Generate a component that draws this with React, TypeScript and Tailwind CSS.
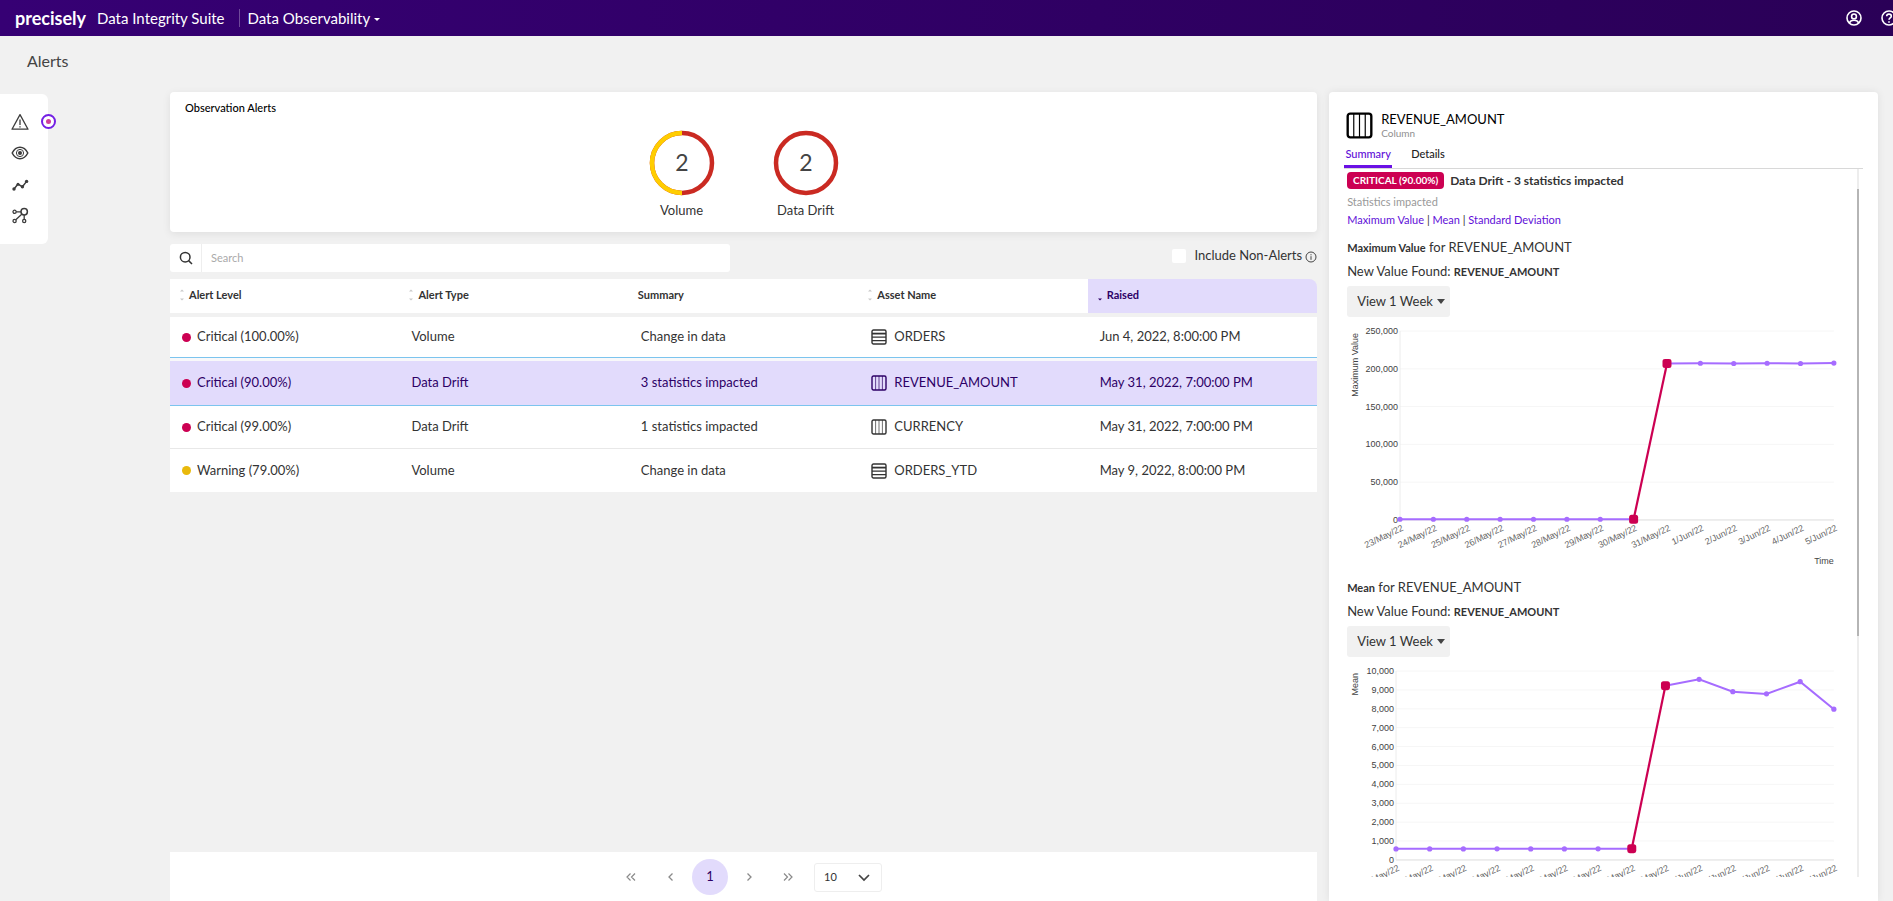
import type { ReactNode } from "react";
import clsx from "clsx";

type AssetKind = "table" | "column";

const alerts: {
  level: string;
  color: string;
  type: string;
  summary: string;
  kind: AssetKind;
  asset: string;
  raised: string;
  selected?: boolean;
}[] = [
  { level: "Critical (100.00%)", color: "bg-[#cc0052]", type: "Volume", summary: "Change in data", kind: "table", asset: "ORDERS", raised: "Jun 4, 2022, 8:00:00 PM" },
  { level: "Critical (90.00%)", color: "bg-[#cc0052]", type: "Data Drift", summary: "3 statistics impacted", kind: "column", asset: "REVENUE_AMOUNT", raised: "May 31, 2022, 7:00:00 PM", selected: true },
  { level: "Critical (99.00%)", color: "bg-[#cc0052]", type: "Data Drift", summary: "1 statistics impacted", kind: "column", asset: "CURRENCY", raised: "May 31, 2022, 7:00:00 PM" },
  { level: "Warning (79.00%)", color: "bg-[#e9b90c]", type: "Volume", summary: "Change in data", kind: "table", asset: "ORDERS_YTD", raised: "May 9, 2022, 8:00:00 PM" }
];

const columns = [
  { name: "Alert Level", sort: "both" },
  { name: "Alert Type", sort: "both" },
  { name: "Summary", sort: "none" },
  { name: "Asset Name", sort: "both" },
  { name: "Raised", sort: "desc" }
];

const days = [
  "23/May/22", "24/May/22", "25/May/22", "26/May/22", "27/May/22",
  "28/May/22", "29/May/22", "30/May/22", "31/May/22", "1/Jun/22",
  "2/Jun/22", "3/Jun/22", "4/Jun/22", "5/Jun/22"
];

const maxValues = [900, 900, 900, 900, 900, 900, 900, 900, 207000, 207300, 207000, 207300, 207000, 207500];
const meanValues = [585, 585, 585, 590, 585, 585, 590, 590, 9222, 9560, 8905, 8790, 9435, 7980];

// index of the first of the two points joined by the anomaly line
const ANOMALY = 7;

function AssetIcon({ kind, className }: { kind: AssetKind; className?: string }) {
  return (
    <svg viewBox="0 0 16 16" fill="none" stroke="currentColor" className={className} aria-hidden="true">
      <rect x="1" y="1" width="14" height="14" rx="1.5" strokeWidth="1.4" />
      {kind === "table" ? (
        <>
          <path d="M1 4.6H15" strokeWidth="1.8" />
          <path d="M1 8.2H15M1 11.6H15" strokeWidth="1.2" />
        </>
      ) : (
        <path d="M4.6 1V15M8 1V15M11.4 1V15" strokeWidth="0.7" />
      )}
    </svg>
  );
}

function SortIcon({ sort }: { sort: string }) {
  if (sort === "none") return null;
  return (
    <svg viewBox="0 0 6 12" className="h-3 w-[6px] shrink-0" aria-hidden="true">
      {sort === "both" && <path d="M1 2.6L3 0.6L5 2.6Z" fill="#c9c9c9" />}
      <path d="M1 9.4L3 11.4L5 9.4Z" fill={sort === "desc" ? "#2d0066" : "#c9c9c9"} />
    </svg>
  );
}

function Donut({ label, value, split }: { label: string; value: number; split?: boolean }) {
  return (
    <div className="flex w-[124px] flex-col items-center">
      <svg viewBox="0 0 66 66" className="size-[66px]" role="img" aria-label={`${label}: ${value}`}>
        <circle cx="33" cy="33" r="30" fill="none" stroke="#ca2a22" strokeWidth="4.5" />
        {split && <path d="M33 3A30 30 0 0 0 33 63" fill="none" stroke="#ffcd00" strokeWidth="4.5" />}
        <text x="33" y="41" textAnchor="middle" fontSize="23" fill="#444">
          {value}
        </text>
      </svg>
      <span className="mt-1 text-[13px] leading-5 text-[#333]">{label}</span>
    </div>
  );
}

function NavLink({ label, children }: { label: string; children: ReactNode }) {
  return (
    <a href="#" aria-label={label} className="block text-[#3c3c3c]">
      <svg viewBox="0 0 18 18" className="size-[18px]" fill="none" stroke="currentColor" strokeWidth="1.3">
        {children}
      </svg>
    </a>
  );
}

function LineChart({ title, values, max, step, left, time }: {
  title: string;
  values: number[];
  max: number;
  step: number;
  left: number;
  time?: boolean;
}) {
  const top = 10;
  const bottom = 199;
  const right = 487;
  const points = values.map((v, i) => ({
    x: left + ((right - left) * i) / (values.length - 1),
    y: bottom - (v / max) * (bottom - top)
  }));
  const path = (list: { x: number; y: number }[]) =>
    list.map((p, i) => `${i ? "L" : "M"}${p.x.toFixed(1)} ${p.y.toFixed(1)}`).join(" ");
  const ticks = Array.from({ length: max / step + 1 }, (_, i) => i * step);

  return (
    <svg viewBox="0 0 490 250" className="mt-1 block w-full shrink-0 overflow-visible font-['Liberation_Sans',sans-serif]" role="img" aria-label={`${title} over time`}>
      {ticks.map((tick) => {
        const y = bottom - (tick / max) * (bottom - top);
        return (
          <g key={tick}>
            <line x1={left} x2={right} y1={y} y2={y} stroke={tick ? "#f6f6f6" : "#dcdcdc"} />
            <text x={left - 2} y={y + 3} textAnchor="end" fontSize="9" fill="#3f3f3f">
              {tick.toLocaleString("en-US")}
            </text>
          </g>
        );
      })}
      <line x1={left} x2={left} y1={top} y2={bottom} stroke="#ececec" />
      <text transform="translate(11 12) rotate(-90)" textAnchor="end" fontSize="9" fill="#444">
        {title}
      </text>
      {days.map((day, i) => (
        <text key={day} transform={`translate(${points[i].x + 4} 209) rotate(-26)`} textAnchor="end" fontSize="9" fill="#666">
          {day}
        </text>
      ))}
      {time && (
        <text x={right} y="243" textAnchor="end" fontSize="9" fill="#444">
          Time
        </text>
      )}
      <path d={path(points.slice(0, ANOMALY + 1))} fill="none" stroke="#a66cff" strokeWidth="2" />
      <path d={path(points.slice(ANOMALY + 1))} fill="none" stroke="#a66cff" strokeWidth="2" />
      <path d={path(points.slice(ANOMALY, ANOMALY + 2))} fill="none" stroke="#cc0052" strokeWidth="2.2" />
      {points.map((p, i) =>
        i === ANOMALY || i === ANOMALY + 1 ? (
          <rect key={i} x={p.x - 4.5} y={p.y - 4.5} width="9" height="9" rx="2.5" fill="#cc0052" />
        ) : (
          <circle key={i} cx={p.x} cy={p.y} r="2.6" fill="#a66cff" />
        )
      )}
    </svg>
  );
}

function StatSection({ stat, children }: { stat: string; children: ReactNode }) {
  return (
    <section>
      <h3 className="text-[13px] leading-5 font-normal">
        <b className="text-[11px] leading-none">{stat}</b> for REVENUE_AMOUNT
      </h3>
      <p className="mt-1 text-[13px] leading-5">
        New Value Found: <b className="text-[11px] leading-none">REVENUE_AMOUNT</b>
      </p>
      <div className="relative mt-[5px] h-[31px] w-[103px]">
        <select
          aria-label={`${stat} range`}
          className="size-full appearance-none rounded-[3px] bg-[#f1f1f1] pl-[10px] text-[13px]"
        >
          <option>View 1 Week</option>
        </select>
        <svg viewBox="0 0 8 5" className="pointer-events-none absolute top-[13px] right-[5px] h-[5px] w-2" aria-hidden="true">
          <path d="M0 0H8L4 5Z" fill="#444" />
        </svg>
      </div>
      {children}
    </section>
  );
}

function Header() {
  return (
    <header className="flex h-9 shrink-0 items-center overflow-hidden bg-gradient-to-r from-[#360074] to-[#2a0057] pl-[15px] text-[15px] text-white">
      <span className="text-[18px] leading-9 font-bold">precisely</span>
      <span className="ml-[11px] leading-9">Data Integrity Suite</span>
      <span className="mr-2 ml-[14px] h-[18px] w-px bg-[#6f4a9a]" />
      <button type="button" className="flex items-center gap-1 leading-9">
        Data Observability
        <svg viewBox="0 0 6 4" className="mt-1 h-1 w-[6px]" aria-hidden="true">
          <path d="M0 0H6L3 3Z" fill="white" />
        </svg>
      </button>
      <div className="-mr-1 ml-auto flex gap-[19px]">
        <button type="button" aria-label="Account">
          <svg viewBox="0 0 16 16" className="size-4" fill="none" stroke="white" strokeWidth="1.6">
            <circle cx="8" cy="8" r="7" />
            <circle cx="8" cy="6.4" r="2.4" />
            <path d="M3.4 13C4.2 10.9 6 10.2 8 10.2S11.8 10.9 12.6 13" />
          </svg>
        </button>
        <button type="button" aria-label="Help">
          <svg viewBox="0 0 16 16" className="size-4" fill="none" stroke="white" strokeWidth="1.6">
            <circle cx="8" cy="8" r="7" />
            <path d="M5.7 6.3C5.7 3.4 10.3 3.5 10.3 6.2C10.3 7.9 8 8 8 9.8M8 11.2V12.8" />
          </svg>
        </button>
      </div>
    </header>
  );
}

function SideNav() {
  return (
    <nav className="relative mt-[2px] flex h-[150px] w-12 shrink-0 flex-col gap-[13px] rounded-r-md bg-white pt-[19px] pl-[11px]">
      <NavLink label="Alerts">
        <path d="M9 1.6L17 16.2H1Z" strokeLinejoin="round" />
        <path d="M9 6.6V12M9 13.2V14.6" />
      </NavLink>
      <NavLink label="Observers">
        <path d="M1.2 9C5 1.4 13 1.4 16.8 9C13 16.6 5 16.6 1.2 9Z" strokeWidth="1.5" />
        <circle cx="9" cy="9" r="3.6" strokeWidth="1" />
        <circle cx="9" cy="9" r="2" fill="currentColor" stroke="none" />
      </NavLink>
      <NavLink label="Trends">
        <path d="M3 14L7 9L11.4 11.8L15.6 6.4" strokeWidth="1.5" />
        <g fill="currentColor" stroke="none">
          <circle cx="3" cy="14" r="1.7" />
          <circle cx="7" cy="9.2" r="1.5" />
          <circle cx="11.4" cy="11.8" r="1.7" />
          <circle cx="15.6" cy="6.4" r="1.7" />
        </g>
      </NavLink>
      <NavLink label="Lineage">
        <circle cx="13.2" cy="5.8" r="3.2" strokeWidth="1.5" />
        <circle cx="3.6" cy="5.8" r="1.6" />
        <circle cx="3.6" cy="15" r="1.6" />
        <circle cx="13.2" cy="15" r="1.6" />
        <path d="M5.2 5.8H10M4.8 13.8L11 8.1M13.2 9V13.4" />
      </NavLink>
      <span className="absolute top-5 -right-2 flex size-[15px] items-center justify-center rounded-full border-2 border-[#7420e4] bg-white">
        <span className="size-[5px] rounded-full bg-[#cf3f9a]" />
      </span>
    </nav>
  );
}

function Pagination() {
  return (
    <div className="mt-auto flex h-[49px] items-start justify-center bg-white pt-[7px]">
      <div className="ml-4 flex h-9 items-center text-[#8a8a8a]">
        <button type="button" aria-label="First page" className="w-10 pl-[5px]">
          <svg viewBox="0 0 10 8" className="h-2 w-[10px]" fill="none" stroke="currentColor" strokeWidth="1.2">
            <path d="M4.5 0.5L1 4L4.5 7.5M9 0.5L5.5 4L9 7.5" />
          </svg>
        </button>
        <button type="button" aria-label="Previous page" className="w-[31px] pl-[7px]">
          <svg viewBox="0 0 5 8" className="h-2 w-[5px]" fill="none" stroke="currentColor" strokeWidth="1.3">
            <path d="M4.5 0.5L1 4L4.5 7.5" />
          </svg>
        </button>
        <button type="button" className="size-9 rounded-full bg-[#e2dbfc] text-[13px] text-[#2d0066]">
          1
        </button>
        <button type="button" aria-label="Next page" className="w-[38px] pl-[19px]">
          <svg viewBox="0 0 5 8" className="h-2 w-[5px]" fill="none" stroke="currentColor" strokeWidth="1.3">
            <path d="M0.5 0.5L4 4L0.5 7.5" />
          </svg>
        </button>
        <button type="button" aria-label="Last page" className="w-12 pl-[17px]">
          <svg viewBox="0 0 10 8" className="h-2 w-[10px]" fill="none" stroke="currentColor" strokeWidth="1.2">
            <path d="M1 0.5L4.5 4L1 7.5M5.5 0.5L9 4L5.5 7.5" />
          </svg>
        </button>
        <div className="relative h-[29px] w-[68px]">
          <select
            aria-label="Rows per page"
            className="size-full appearance-none rounded-[3px] border border-[#eeeeee] bg-white pl-[9px] text-[11px] text-[#333]"
          >
            <option>10</option>
          </select>
          <svg viewBox="0 0 12 8" className="pointer-events-none absolute top-[11px] right-3 h-2 w-3" fill="none" stroke="#444" strokeWidth="1.7">
            <path d="M1 1L6 6L11 1" />
          </svg>
        </div>
      </div>
    </div>
  );
}

function AlertsTable() {
  return (
    <table className="mt-[7px] w-full table-fixed border-separate border-spacing-0 text-left text-[13px] text-[#333]">
      <thead>
        <tr>
          {columns.map((col) => (
            <th
              key={col.name}
              className={clsx(
                "h-[38px] border-b-4 border-[#f1f1f1] p-0 pb-[2px] pl-[9px] text-[11px] font-bold",
                col.sort === "desc" ? "rounded-tr-lg bg-[#e2dbfc] text-[#2d0066]" : "bg-white"
              )}
            >
              <span className="flex items-center gap-1">
                <SortIcon sort={col.sort} />
                {col.name}
              </span>
            </th>
          ))}
        </tr>
      </thead>
      <tbody>
        {alerts.map((row, i) => (
          <tr
            key={i}
            className={clsx(
              row.selected
                ? "text-[#2d0066] [&>td]:h-12 [&>td]:border-t-3 [&>td]:border-b [&>td]:border-t-[#f8f8fa] [&>td]:border-b-[#7cc4ee] [&>td]:bg-[#e2dbfc]"
                : "[&>td]:bg-white",
              i === 0 && "[&>td]:h-[41px] [&>td]:border-b [&>td]:border-[#7cc4ee]",
              i === 2 && "[&>td]:h-[43px] [&>td]:border-b [&>td]:border-[#e8e8e8]",
              i === 3 && "[&>td]:h-[43px]"
            )}
          >
            <td className="p-0 pl-3">
              <span className="flex items-center gap-[6px]">
                <span className={clsx("size-[9px] rounded-full", row.color)} />
                {row.level}
              </span>
            </td>
            <td className="p-0 pl-3">{row.type}</td>
            <td className="p-0 pl-3">{row.summary}</td>
            <td className="p-0 pl-[13px]">
              <span className="flex items-center gap-[7px]">
                <AssetIcon kind={row.kind} className="size-4" />
                {row.asset}
              </span>
            </td>
            <td className="p-0 pl-3">{row.raised}</td>
          </tr>
        ))}
      </tbody>
    </table>
  );
}

function DetailPanel() {
  return (
    <aside className="flex min-h-0 flex-col rounded-t-[4px] bg-white pt-[18px] pr-[15px] pb-6 pl-[15px] shadow-[0_0_8px_rgba(0,0,0,0.08)]">
      <div className="flex items-center gap-2 pl-[2px]">
        <AssetIcon kind="column" className="size-[27px] text-black" />
        <div className="py-px">
          <h2 className="text-[13px] leading-4 text-black">REVENUE_AMOUNT</h2>
          <p className="text-[10px] leading-3 text-[#8f8f8f]">Column</p>
        </div>
      </div>
      <div className="mt-1 flex gap-[19px] border-b border-[#d8d8d8] text-[11px] font-medium" role="tablist">
        <button type="button" role="tab" aria-selected="true" className="h-[24px] w-12 border-b-3 border-[#6a10e5] text-[#5f0fd8]">
          Summary
        </button>
        <button type="button" role="tab" aria-selected="false" className="h-[24px] border-b-3 border-transparent text-[#222]">
          Details
        </button>
      </div>
      <div className="flex min-h-0 flex-1 pr-1">
        <div className="min-w-0 flex-1 overflow-hidden pt-[3px] pr-5 pl-[3px] text-[#333]">
          <div className="flex items-center gap-[6px]">
            <span className="flex h-[17px] w-[97px] items-center justify-center rounded-[4px] bg-[#cc0052] text-[10px] font-bold text-white">
              CRITICAL (90.00%)
            </span>
            <span className="text-xs leading-[17px] font-bold">Data Drift - 3 statistics impacted</span>
          </div>
          <p className="mt-1 text-[11px] leading-[18px] text-[#999]">Statistics impacted</p>
          <p className="mb-2 text-[11px] leading-[18px]">
            <a href="#" className="text-[#5f0fd8]">Maximum Value</a> |{" "}
            <a href="#" className="text-[#5f0fd8]">Mean</a> |{" "}
            <a href="#" className="text-[#5f0fd8]">Standard Deviation</a>
          </p>
          <StatSection stat="Maximum Value">
            <LineChart title="Maximum Value" values={maxValues} max={250000} step={50000} left={53} time />
          </StatSection>
          <div className="h-[6px]" />
          <StatSection stat="Mean">
            <LineChart title="Mean" values={meanValues} max={10000} step={1000} left={49} />
          </StatSection>
        </div>
        <div className="w-[2px] bg-[#ededed] pt-5">
          <div className="h-[65%] bg-[#b5b5b5]" />
        </div>
      </div>
    </aside>
  );
}

export default function App() {
  return (
    <div className="flex h-screen flex-col overflow-hidden bg-[#f1f1f1] font-[Lato,sans-serif]">
      <Header />
      <h1 className="h-14 shrink-0 pt-[13px] pl-[27px] text-base leading-6 text-[#444]">Alerts</h1>
      <div className="flex min-h-0 flex-1 pr-[15px]">
        <SideNav />
        <div className="ml-[122px] grid min-w-0 flex-1 grid-cols-[209fr_100fr] grid-rows-[minmax(0,1fr)] gap-3">
          <main className="flex min-w-0 flex-col">
            <section className="h-[140px] shrink-0 rounded-[4px] bg-white px-[15px] pt-2 shadow-[0_2px_8px_rgba(0,0,0,0.08)]">
              <h2 className="text-[11px] leading-4 font-medium text-black">Observation Alerts</h2>
              <div className="mt-[14px] flex justify-center">
                <Donut label="Volume" value={2} split />
                <Donut label="Data Drift" value={2} />
              </div>
            </section>
            <div className="mt-3 flex h-7 items-center justify-between">
              <label className="flex h-7 w-[560px] items-center rounded-[3px] bg-white">
                <span className="flex h-7 w-8 items-center justify-center border-r border-[#eeeeee]">
                  <svg viewBox="0 0 14 14" className="size-[14px]" fill="none" stroke="#333" strokeWidth="1.5">
                    <circle cx="6.2" cy="6.2" r="4.8" />
                    <path d="M9.6 9.6L13 13" />
                  </svg>
                </span>
                <input
                  type="search"
                  aria-label="Search"
                  placeholder="Search"
                  className="h-7 flex-1 pb-[2px] pl-[9px] text-[11px] outline-none placeholder:text-[#aaa]"
                />
              </label>
              <div className="mb-1 flex items-center text-[13px] text-[#333]">
                <input id="non-alerts" type="checkbox" className="mr-2 size-[14px] appearance-none rounded-[2px] bg-white" />
                <label htmlFor="non-alerts">Include Non-Alerts</label>
                <svg viewBox="0 0 12 12" className="mt-[2px] ml-[3px] size-3" fill="none" stroke="#444" aria-hidden="true">
                  <circle cx="6" cy="6" r="5" />
                  <path d="M6 5.2V8.8M6 3.2V4.3" />
                </svg>
              </div>
            </div>
            <AlertsTable />
            <Pagination />
          </main>
          <DetailPanel />
        </div>
      </div>
    </div>
  );
}
